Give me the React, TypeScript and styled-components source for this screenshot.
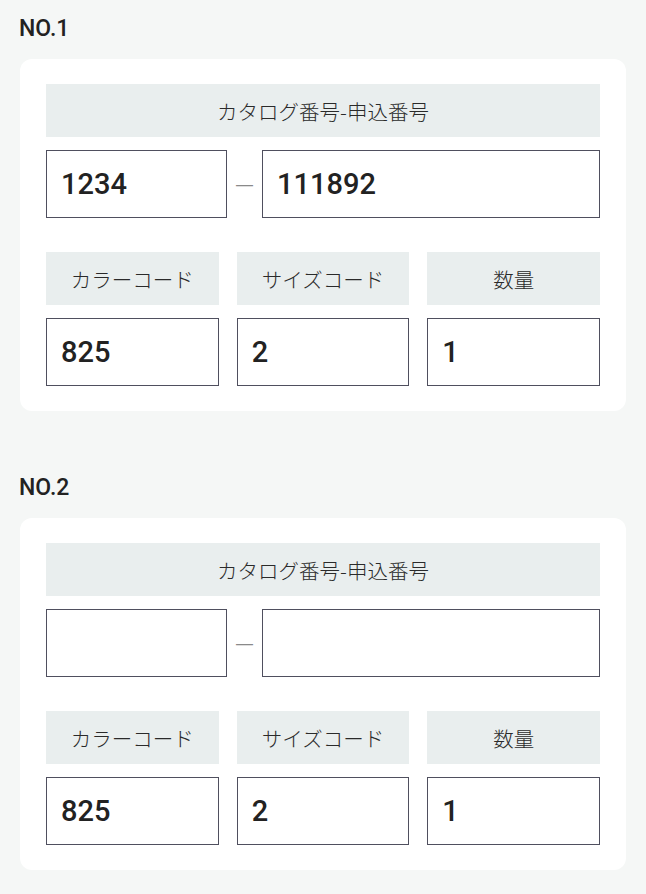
import styled, { createGlobalStyle } from "styled-components";

type Order = {
  no: number;
  catalog: string;
  entry: string;
  color: string;
  size: string;
  qty: string;
};

const orders: Order[] = [
  { no: 1, catalog: "1234", entry: "111892", color: "825", size: "2", qty: "1" },
  { no: 2, catalog: "", entry: "", color: "825", size: "2", qty: "1" },
];

const GlobalStyle = createGlobalStyle`
  * { box-sizing: border-box; }
  html, body {
    margin: 0;
    background: #f5f7f6;
  }
  body {
    font-family: Roboto, "Noto Sans CJK JP", sans-serif;
    color: #222;
  }
`;

const App = () => {
  return (
    <>
      <GlobalStyle />
      <Page>
        {orders.map((order) => (
          <Section key={order.no}>
            <Heading>NO.{order.no}</Heading>
            <Card>
              <Label>カタログ番号-申込番号</Label>
              <CatalogRow>
                <Field defaultValue={order.catalog} />
                <Separator>—</Separator>
                <Field defaultValue={order.entry} />
              </CatalogRow>

              <CodeGrid>
                <Label>カラーコード</Label>
                <Label>サイズコード</Label>
                <Label>数量</Label>
                <Field defaultValue={order.color} />
                <Field defaultValue={order.size} />
                <Field defaultValue={order.qty} />
              </CodeGrid>
            </Card>
          </Section>
        ))}
      </Page>
    </>
  );
};

export default App;

/* -------- styles -------- */

const Page = styled.main`
  padding: 18px 20px 23px;
  display: flex;
  flex-direction: column;
  gap: 66px;
`;

const Section = styled.section`
  display: flex;
  flex-direction: column;
`;

const Heading = styled.h2`
  margin: 0 0 19px -1px;
  font-family: Roboto, sans-serif;
  font-size: 23px;
  line-height: 22px;
  font-weight: 500;
  color: #222;
`;

const Card = styled.div`
  background: #fff;
  border-radius: 12px;
  padding: 25px 26px;
`;

const Label = styled.div`
  height: 53px;
  background: #e9eeee;
  display: flex;
  align-items: center;
  justify-content: center;
  font-family: "Noto Sans CJK JP", sans-serif;
  font-size: 20.5px;
  font-weight: 300;
  color: #2a2a2a;
`;

const CatalogRow = styled.div`
  display: flex;
  align-items: center;
  margin-top: 13px;

  > input:first-child {
    width: 181px;
    flex: none;
  }
  > input:last-child {
    flex: 1;
  }
`;

const Separator = styled.span`
  width: 35px;
  flex: none;
  text-align: center;
  font-family: "Liberation Sans", sans-serif;
  font-size: 17px;
  line-height: 1;
  color: #8a8a8a;
`;

const CodeGrid = styled.div`
  display: grid;
  grid-template-columns: repeat(3, 1fr);
  column-gap: 18px;
  row-gap: 13px;
  margin-top: 34px;
`;

const Field = styled.input`
  display: block;
  min-width: 0;
  width: 100%;
  height: 68px;
  margin: 0;
  padding: 0 14px;
  border: 1px solid #4f4f5e;
  border-radius: 0;
  background: #fff;
  font-family: Roboto, sans-serif;
  font-size: 29px;
  font-weight: 500;
  color: #222;
  outline: none;
`;
